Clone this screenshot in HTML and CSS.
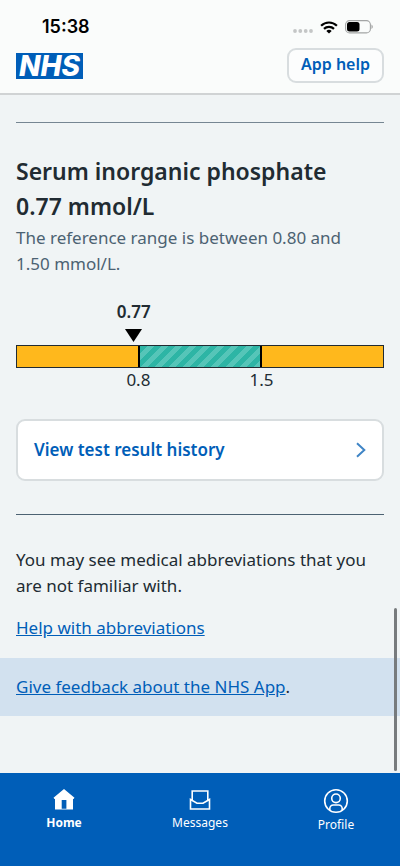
FILE: index.html
```
<!DOCTYPE html>
<html lang="en">
<head>
<meta charset="utf-8">
<meta name="viewport" content="width=device-width, initial-scale=1">
<title>Test result - NHS App</title>
<link rel="stylesheet" href="styles.css">
</head>
<body>
<header class="top">
  <div class="status">
    <span class="time">15:38</span>
    <span class="signals">
      <svg width="22" height="12" viewBox="0 0 22 12" fill="#c4c6c6" aria-hidden="true"><circle cx="4" cy="10" r="1.900"/><circle cx="9.300" cy="10" r="1.900"/><circle cx="14.700" cy="10" r="1.900"/><circle cx="20" cy="10" r="1.900"/></svg>
      <svg width="18" height="13" viewBox="0 0 18 13" fill="none" stroke="#000" stroke-width="2.2" aria-hidden="true"><path d="M1.1 4.7a11.3 11.3 0 0 1 15.8 0M4 7.9a7.2 7.2 0 0 1 10 0"/><path d="M9 12.6 6.3 9.9a4 4 0 0 1 5.4 0z" fill="#000" stroke="none"/></svg>
      <svg width="28" height="14" viewBox="0 0 28 14" aria-hidden="true"><rect x=".6" y=".6" width="24.8" height="12.3" rx="4" fill="none" stroke="#a3a5a5" stroke-width="1.1"/><rect x="2" y="2" width="12.500" height="9.500" rx="2.500"/><path d="M26.500 4.600c1.600.8 1.600 3.600 0 4.400z" fill="#999"/></svg>
    </span>
  </div>
  <div class="brand">
    <a class="logo" href="#home">NHS</a>
    <button class="help" type="button">App help</button>
  </div>
</header>

<main class="content">
  <section class="result">
    <h2 class="title">Serum inorganic phosphate<br>0.77 mmol/L</h2>
    <p class="range">The reference range is between 0.80 and 1.50&nbsp;mmol/L.</p>
    <div class="chart">
      <div class="marker">
        <span class="value">0.77</span>
        <svg width="17" height="13" viewBox="0 0 17 13" aria-hidden="true"><path d="M0 0h17L8.500 13z"/></svg>
      </div>
      <div class="bar"><span></span><span class="normal"></span><span></span></div>
      <div class="limits"><span>0.8</span><span>1.5</span></div>
    </div>
    <a class="card" href="#history">View test result history
      <svg width="10" height="16" viewBox="0 0 10 16" fill="none" stroke="#3f85c6" stroke-width="2" aria-hidden="true"><path d="m1 1.300 7.300 6.700L1 14.700"/></svg>
    </a>
  </section>
  <section class="abbreviations">
    <p>You may see medical abbreviations that you are not familiar with.</p>
    <p><a href="#abbreviations">Help with abbreviations</a></p>
  </section>
  <p class="feedback"><a href="#feedback">Give feedback about the NHS App</a>.</p>
</main>
<div class="scrollbar" aria-hidden="true"></div>

<nav class="tabs">
  <a class="tab current" href="#home">
    <svg width="24" height="24" viewBox="0 0 24 24" aria-hidden="true"><path fill="#fff" fill-rule="evenodd" d="M12 1 22.500 9.800 21.500 11H21v10.500H3V11h-.5l-1-1.200zM9.700 12v8.800h4.700V12z"/></svg>
    Home
  </a>
  <a class="tab" href="#messages">
    <svg width="24" height="24" viewBox="0 0 24 24" fill="none" stroke="#fff" stroke-width="1.600" aria-hidden="true"><path d="M4.200 12.300V3h15.600v9.300M2.500 11.500l6.500 3.800h6l6.500-3.800V21h-19z"/></svg>
    Messages
  </a>
  <a class="tab" href="#profile">
    <svg width="26" height="26" viewBox="0 0 26 26" fill="none" stroke="#fff" stroke-width="1.600" aria-hidden="true"><circle cx="13" cy="13" r="11.300"/><circle cx="13" cy="10.300" r="4.300"/><path d="M6.800 22.200v-1.700a3.500 3.500 0 0 1 3.500-3.500h5.400a3.500 3.500 0 0 1 3.500 3.500v1.700"/></svg>
    Profile
  </a>
</nav>
</body>
</html>
```
FILE: styles.css
```
* { box-sizing: border-box; }
body {
  margin: 0;
  min-height: 100vh;
  display: flex;
  flex-direction: column;
  background: #f0f4f5;
  color: #212b32;
  font: 450 17px/26px "Noto Sans", "Open Sans", sans-serif;
}
h2, p { margin: 0; }
a { color: #005eb8; }
.top {
  background: #fafcfb;
  border-bottom: 2px solid #d0d3d4;
  padding: 16px 16px 10px;
}
.status {
  display: flex;
  justify-content: space-between;
  align-items: center;
  height: 22px;
  padding: 0 11px 0 26px;
  color: #000;
}
.time { font: 600 18px/22px Inter, sans-serif; }
.signals { display: flex; align-items: center; gap: 7px; }
.brand {
  display: flex;
  justify-content: space-between;
  align-items: center;
  margin-top: 10px;
}
.logo {
  padding: 0 3px;
  background: #005eb8;
  color: #fff;
  font: italic 800 28px/26px Inter, sans-serif;
  text-decoration: none;
}
.card svg, .tab svg, .marker svg { display: block; }
.help {
  height: 35px;
  padding: 0 12px 4px;
  border: 2px solid #d8dddf;
  border-radius: 9px;
  background: #fcfdfd;
  color: #005eb8;
  font: 600 16px/24px "Noto Sans", sans-serif;
}
.content { flex: 1; }
.result {
  margin: 27px 16px 0;
  padding-top: 31px;
  border-top: 1px solid #768692;
}
.title { font-size: 23px; line-height: 35px; font-weight: 600; }
.range { color: #4c6272; margin-top: 1px; }
.chart { margin-top: 22px; }
.marker {
  width: 34px;
  margin-left: 32%;
  transform: translateX(-50%);
  display: flex;
  flex-direction: column;
  align-items: center;
  gap: 4px;
}
.value { font-weight: 600; }
.bar {
  display: grid;
  grid-template-columns: 33% 1fr 33%;
  height: 23px;
  margin-top: 3px;
  border: 1px solid #212b32;
  background: #ffb81c;
}
.normal {
  border: solid #000;
  border-width: 0 2px;
  background: repeating-linear-gradient(135deg, #2db5a5 0 5px, #55c5b8 5px 10px);
}
.limits {
  display: flex;
  justify-content: space-between;
  padding: 0 30%;
  line-height: 24px;
}
.card {
  display: flex;
  justify-content: space-between;
  align-items: center;
  height: 62px;
  margin-top: 27px;
  padding: 0 16px;
  border: 2px solid #d8dddf;
  border-radius: 9px;
  background: #fff;
  font-weight: 600;
  text-decoration: none;
}
.abbreviations {
  margin: 33px 16px 0;
  padding-top: 32px;
  border-top: 1px solid #4c6272;
  display: grid;
  gap: 16px;
}
.feedback {
  margin-top: 17px;
  padding: 16px;
  background: #d2e1ef;
}
.scrollbar {
  position: fixed;
  right: 3px;
  bottom: 95px;
  width: 3px;
  height: 163px;
  border-radius: 2px;
  background: #777b7d;
}
.tabs {
  display: grid;
  grid-template-columns: 32% 1fr 32%;
  padding: 15px 0 32px;
  background: #005eb8;
}
.tab {
  display: flex;
  flex-direction: column;
  align-items: center;
  gap: 2px;
  color: #fff;
  font-size: 12px;
  line-height: 18px;
  text-decoration: none;
}
.current { font-weight: 700; }
```
